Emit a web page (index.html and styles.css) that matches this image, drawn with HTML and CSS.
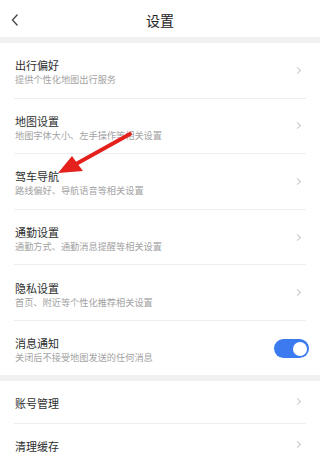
FILE: index.html
```html
<!DOCTYPE html>
<html lang="zh">
<head>
<meta charset="utf-8">
<link rel="stylesheet" href="styles.css">
</head>
<body>
<div class="page">
  <header class="header">
    <svg class="back" width="10" height="14" viewBox="0 0 10 14"><path d="M7.5 1.5 L2.5 7 L7.5 12.5" fill="none" stroke="#444" stroke-width="1.3"/></svg>
    <div class="title">设置</div>
  </header>
  <div class="band"></div>
  <div class="group">
    <div class="row two"><div class="text"><div class="t">出行偏好</div><div class="s">提供个性化地图出行服务</div></div><span class="chev"></span></div>
    <div class="row two"><div class="text"><div class="t">地图设置</div><div class="s">地图字体大小、左手操作等相关设置</div></div><span class="chev"></span></div>
    <div class="row two"><div class="text"><div class="t">驾车导航</div><div class="s">路线偏好、导航语音等相关设置</div></div><span class="chev"></span></div>
    <div class="row two"><div class="text"><div class="t">通勤设置</div><div class="s">通勤方式、通勤消息提醒等相关设置</div></div><span class="chev"></span></div>
    <div class="row two"><div class="text"><div class="t">隐私设置</div><div class="s">首页、附近等个性化推荐相关设置</div></div><span class="chev"></span></div>
    <div class="row two last"><div class="text"><div class="t">消息通知</div><div class="s">关闭后不接受地图发送的任何消息</div></div><span class="toggle"><span class="knob"></span></span></div>
  </div>
  <div class="band"></div>
  <div class="group">
    <div class="row one"><div class="text"><div class="t">账号管理</div></div><span class="chev"></span></div>
    <div class="row one"><div class="text"><div class="t">清理缓存</div></div><span class="chev"></span></div>
  </div>
  <svg class="arrow" width="285" height="460" viewBox="0 0 285 460">
    <line x1="130" y1="134" x2="76" y2="164" stroke="#e5211d" stroke-width="3.8" stroke-linecap="round"/>
    <polygon points="58,173 72,156 77,163 83,171" fill="#e5211d"/>
  </svg>
</div>
</body>
</html>
```
FILE: styles.css
```css
html, body {
  margin: 0;
  padding: 0;
  background: #ffffff;
}
.page {
  position: relative;
  width: 100%;
  min-width: 285px;
  height: 460px;
  overflow: hidden;
  font-family: "Noto Sans CJK SC", "Noto Sans", sans-serif;
  color: #333;
}
.header {
  position: relative;
  height: 37px;
  display: flex;
  align-items: center;
  justify-content: center;
}
.back {
  position: absolute;
  left: 10px;
  top: 13px;
}
.title {
  font-size: 14px;
  color: #222;
  line-height: 18px;
  margin-top: 2px;
}
.band {
  height: 6px;
  background: #f1f1f1;
}
.row {
  margin: 0 14px 0 14px;
  padding-left: 1px;
  display: flex;
  align-items: center;
  justify-content: space-between;
  border-bottom: 1px solid #eeeeee;
  box-sizing: border-box;
}
.row.two {
  height: 55.6px;
}
.row.two .text {
  padding-top: 3px;
}
.row.last {
  border-bottom: none;
  height: 54px;
}
.row.one {
  height: 43px;
}
.row.one .text {
  padding-top: 2px;
}
.t {
  font-size: 11px;
  line-height: 14px;
  color: #2e2e2e;
}
.s {
  font-size: 9.2px;
  line-height: 12px;
  color: #a3a3a3;
  margin-top: 1px;
}
.chev {
  width: 4px;
  height: 4px;
  border-top: 1px solid #c8c8c8;
  border-right: 1px solid #c8c8c8;
  transform: rotate(45deg);
  margin-right: 6px;
}
.toggle {
  width: 35px;
  height: 19px;
  border-radius: 10px;
  background: #3c7af0;
  display: flex;
  align-items: center;
  justify-content: flex-end;
  padding-right: 2px;
  box-sizing: border-box;
  margin-right: -3px;
  margin-top: 2px;
}
.knob {
  width: 14px;
  height: 14px;
  border-radius: 50%;
  background: #ffffff;
}
.arrow {
  position: absolute;
  left: 0;
  top: 0;
  pointer-events: none;
}
```
